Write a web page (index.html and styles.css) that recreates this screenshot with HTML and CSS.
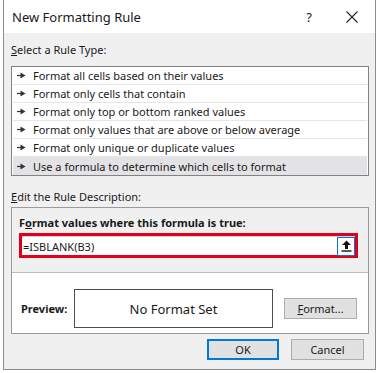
FILE: index.html
```html
<!DOCTYPE html>
<html lang="en">
<head>
  <meta charset="UTF-8" />
  <title>New Formatting Rule</title>
  <link rel="stylesheet" href="styles.css">
</head>
<body>
  <div class="dialog">
    <div class="titlebar">
      <span class="title">New Formatting Rule</span>
      <span class="help">?</span>
      <span class="close">
        <svg width="12" height="12" viewBox="0 0 12 12"><path d="M0.5 0.5 L11.5 11.5 M11.5 0.5 L0.5 11.5" stroke="#222" stroke-width="1.1" fill="none"/></svg>
      </span>
    </div>

    <div class="content">
      <div class="label select-label"><u>S</u>elect a Rule Type:</div>
      <ul class="rule-list">
        <li><svg class="arrow" width="9" height="7" viewBox="0 0 9 7"><path d="M0 3.5 H4" stroke="#333" stroke-width="1.2"/><path d="M3.5 0.5 L8.5 3.5 L3.5 6.5 Z" fill="#333"/></svg>Format all cells based on their values</li>
        <li><svg class="arrow" width="9" height="7" viewBox="0 0 9 7"><path d="M0 3.5 H4" stroke="#333" stroke-width="1.2"/><path d="M3.5 0.5 L8.5 3.5 L3.5 6.5 Z" fill="#333"/></svg>Format only cells that contain</li>
        <li><svg class="arrow" width="9" height="7" viewBox="0 0 9 7"><path d="M0 3.5 H4" stroke="#333" stroke-width="1.2"/><path d="M3.5 0.5 L8.5 3.5 L3.5 6.5 Z" fill="#333"/></svg>Format only top or bottom ranked values</li>
        <li><svg class="arrow" width="9" height="7" viewBox="0 0 9 7"><path d="M0 3.5 H4" stroke="#333" stroke-width="1.2"/><path d="M3.5 0.5 L8.5 3.5 L3.5 6.5 Z" fill="#333"/></svg>Format only values that are above or below average</li>
        <li><svg class="arrow" width="9" height="7" viewBox="0 0 9 7"><path d="M0 3.5 H4" stroke="#333" stroke-width="1.2"/><path d="M3.5 0.5 L8.5 3.5 L3.5 6.5 Z" fill="#333"/></svg>Format only unique or duplicate values</li>
        <li class="selected"><svg class="arrow" width="9" height="7" viewBox="0 0 9 7"><path d="M0 3.5 H4" stroke="#333" stroke-width="1.2"/><path d="M3.5 0.5 L8.5 3.5 L3.5 6.5 Z" fill="#333"/></svg>Use a formula to determine which cells to format</li>
      </ul>

      <div class="label edit-label"><u>E</u>dit the Rule Description:</div>
      <div class="desc-box">
        <div class="formula-area">
          <div class="formula-label">F<u>o</u>rmat values where this formula is true:</div>
          <div class="highlight">
            <div class="formula-input">
              <span class="formula-text">=ISBLANK(B3)</span>
              <span class="collapse-btn">
                <svg width="11" height="12" viewBox="0 0 11 12"><path d="M5.5 0.5 L10 5 H7 V9 H4 V5 H1 Z" fill="#111"/><path d="M0.5 11 H10.5" stroke="#111" stroke-width="1.4"/></svg>
              </span>
            </div>
          </div>
        </div>
        <div class="preview-area">
          <span class="preview-label">Preview:</span>
          <div class="preview-box">No Format Set</div>
          <button class="btn format-btn"><u>F</u>ormat...</button>
        </div>
      </div>

      <div class="actions">
        <button class="btn ok-btn">OK</button>
        <button class="btn cancel-btn">Cancel</button>
      </div>
    </div>
  </div>
</body>
</html>
```

FILE: styles.css
```css
:root {
  --bg: #f0f0f0;
  --border: #8c8c8c;
  --text: #1a1a1a;
  --blue: #0078d7;
  --red: #e0001b;
}

* {
  box-sizing: border-box;
}

body {
  margin: 0;
  background-color: #ffffff;
  font-family: 'Noto Sans', 'Open Sans', sans-serif;
  font-size: 11px;
  color: var(--text);
}

u {
  text-decoration: underline;
  text-underline-offset: 1px;
}

.dialog {
  margin-left: 3px;
  width: 373px;
  height: 370px;
  border: 1px solid var(--border);
  border-top: none;
  background-color: var(--bg);
}

.titlebar {
  height: 33px;
  background-color: #ffffff;
  display: flex;
  align-items: center;
  padding-left: 8px;
}

.title {
  font-size: 13px;
  flex: 1;
}

.help {
  font-size: 13px;
  width: 40px;
  text-align: center;
}

.close {
  width: 46px;
  display: flex;
  justify-content: center;
}

.content {
  padding: 9px 6px 0 7px;
}

.label {
  height: 16px;
  line-height: 16px;
}

.rule-list {
  list-style: none;
  margin: 8px 0 0 0;
  padding: 0 1px;
  background-color: #ffffff;
  border: 1px solid #828282;
}

.rule-list li {
  height: 18px;
  border-bottom: 1px solid #e6e6e6;
  padding-left: 4px;
  display: flex;
  align-items: center;
}

.rule-list li:last-child {
  border-bottom: none;
}

.rule-list li.selected {
  background-color: #e3e3e6;
}

.arrow {
  margin-right: 7px;
}

.edit-label {
  margin-top: 13px;
}

.desc-box {
  margin-top: 2px;
  height: 127px;
  border: 1px solid #9a9a9a;
  background-color: #ffffff;
}

.formula-area {
  height: 65px;
  padding: 7px 10px 0 7px;
  border-bottom: 1px solid #bdbdbd;
  background-color: var(--bg);
}

.formula-label {
  font-weight: 700;
  height: 16px;
  line-height: 16px;
}

.highlight {
  margin-top: 2px;
  height: 25px;
  border: 3px solid var(--red);
}

.formula-input {
  height: 19px;
  background-color: #ffffff;
  border-top: 1px solid #d0d0d0;
  display: flex;
  align-items: center;
  justify-content: space-between;
  padding-left: 1px;
}

.collapse-btn {
  width: 18px;
  height: 19px;
  border: 1px solid var(--blue);
  background-color: #ffffff;
  display: flex;
  align-items: center;
  justify-content: center;
  margin-right: 0;
}

.preview-area {
  height: 60px;
  display: flex;
  align-items: center;
  padding: 11px 0 0 9px;
}

.preview-label {
  font-weight: 700;
  width: 53px;
}

.preview-box {
  width: 199px;
  height: 39px;
  border: 1px solid #4d4d4d;
  background-color: #ffffff;
  display: flex;
  align-items: center;
  justify-content: center;
  font-size: 13px;
}

.btn {
  font-family: inherit;
  font-size: 11px;
  color: var(--text);
  background-color: #e1e1e1;
  border: 1px solid #adadad;
  padding: 0;
  height: 21px;
}

.format-btn {
  width: 73px;
  margin-left: 11px;
}

.actions {
  display: flex;
  justify-content: flex-end;
  gap: 12px;
  margin-top: 5px;
  padding-right: 5px;
}

.ok-btn {
  width: 72px;
  border: 2px solid var(--blue);
}

.cancel-btn {
  width: 73px;
}
```
